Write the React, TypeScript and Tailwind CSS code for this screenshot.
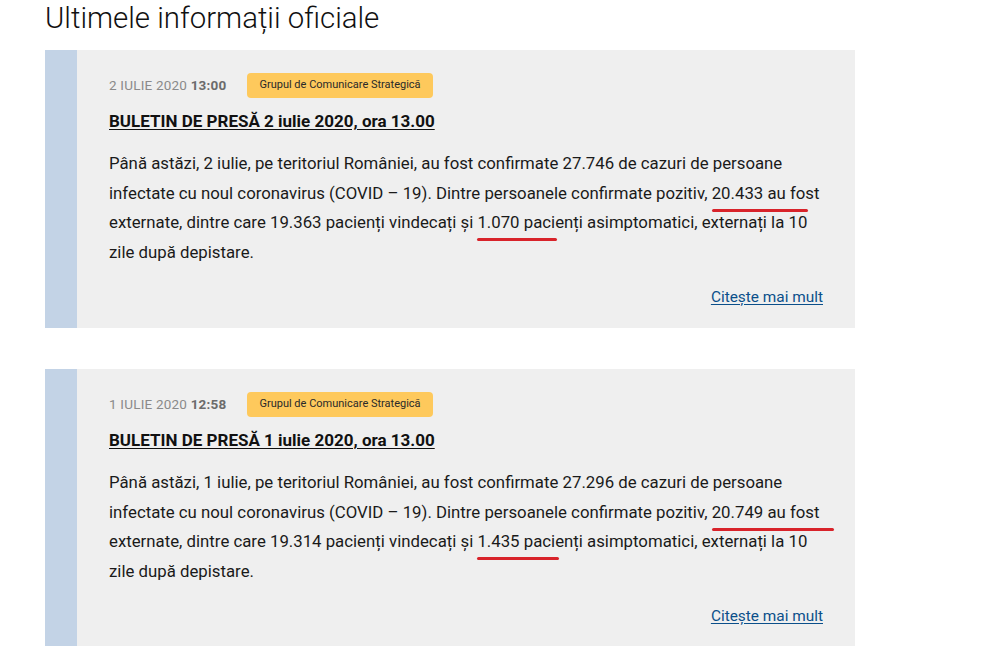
type Post = {
  day: string;
  time: string;
  title: string;
  lines: React.ReactNode[];
};

const RedMark = ({ children, width }: { children: React.ReactNode; width: number }) => (
  <span className="relative">
    {children}
    <span className="absolute left-0 top-[26px] h-[3px] bg-[#d8232a] rounded-full" style={{ width }} />
  </span>
);

const posts: Post[] = [
  {
    day: '2 IULIE 2020',
    time: '13:00',
    title: 'BULETIN DE PRESĂ 2 iulie 2020, ora 13.00',
    lines: [
      <>Până astăzi, 2 iulie, pe teritoriul României, au fost confirmate 27.746 de cazuri de persoane</>,
      <>infectate cu noul coronavirus (COVID – 19). Dintre persoanele confirmate pozitiv, <RedMark width={96}>20.433 au fost</RedMark></>,
      <>externate, dintre care 19.363 pacienți vindecați și <RedMark width={80}>1.070 pacienți</RedMark> asimptomatici, externați la 10</>,
      <>zile după depistare.</>,
    ],
  },
  {
    day: '1 IULIE 2020',
    time: '12:58',
    title: 'BULETIN DE PRESĂ 1 iulie 2020, ora 13.00',
    lines: [
      <>Până astăzi, 1 iulie, pe teritoriul României, au fost confirmate 27.296 de cazuri de persoane</>,
      <>infectate cu noul coronavirus (COVID – 19). Dintre persoanele confirmate pozitiv, <RedMark width={122}>20.749 au fost</RedMark></>,
      <>externate, dintre care 19.314 pacienți vindecați și <RedMark width={82}>1.435 pacienți</RedMark> asimptomatici, externați la 10</>,
      <>zile după depistare.</>,
    ],
  },
];

function PostCard({ post }: { post: Post }) {
  return (
    <div className="flex w-[810px] bg-[#efefef]">
      <div className="w-8 shrink-0 bg-[#c3d3e6]" />
      <div className="flex-1 px-8 pt-[23px] pb-[19px]">
        <div className="flex items-center gap-[21px]">
          <span className="text-[13.5px] text-[#8a8a8a] tracking-[0.2px]">
            {post.day} <span className="font-bold text-[#6b6b6b]">{post.time}</span>
          </span>
          <span className="h-[25px] flex items-center rounded-[4px] bg-[#fec95c] px-3 text-[11px] text-[#2a2a2a]">
            Grupul de Comunicare Strategică
          </span>
        </div>
        <a href="#" className="block mt-[13px] text-[17px] font-bold text-[#111] underline underline-offset-2 leading-5">
          {post.title}
        </a>
        <p className="mt-[18px] text-[16.8px] leading-[29.5px] text-[#1a1a1a] whitespace-nowrap">
          {post.lines.map((l, i) => (
            <span key={i} className="block">{l}</span>
          ))}
        </p>
        <div className="mt-[19px] flex justify-end">
          <a href="#" className="text-[15.4px] text-[#0b4f8a] underline underline-offset-2">
            Citește mai mult
          </a>
        </div>
      </div>
    </div>
  );
}

export default function App() {
  return (
    <div className="min-h-[646px] bg-white pl-[45px] font-['Roboto',sans-serif]">
      <h1 className="pt-[1px] text-[29.4px] font-light leading-[34px] text-[#111]">Ultimele informații oficiale</h1>
      <div className="mt-[15px] flex flex-col gap-[41px]">
        {posts.map(p => (
          <PostCard key={p.title} post={p} />
        ))}
      </div>
    </div>
  );
}
